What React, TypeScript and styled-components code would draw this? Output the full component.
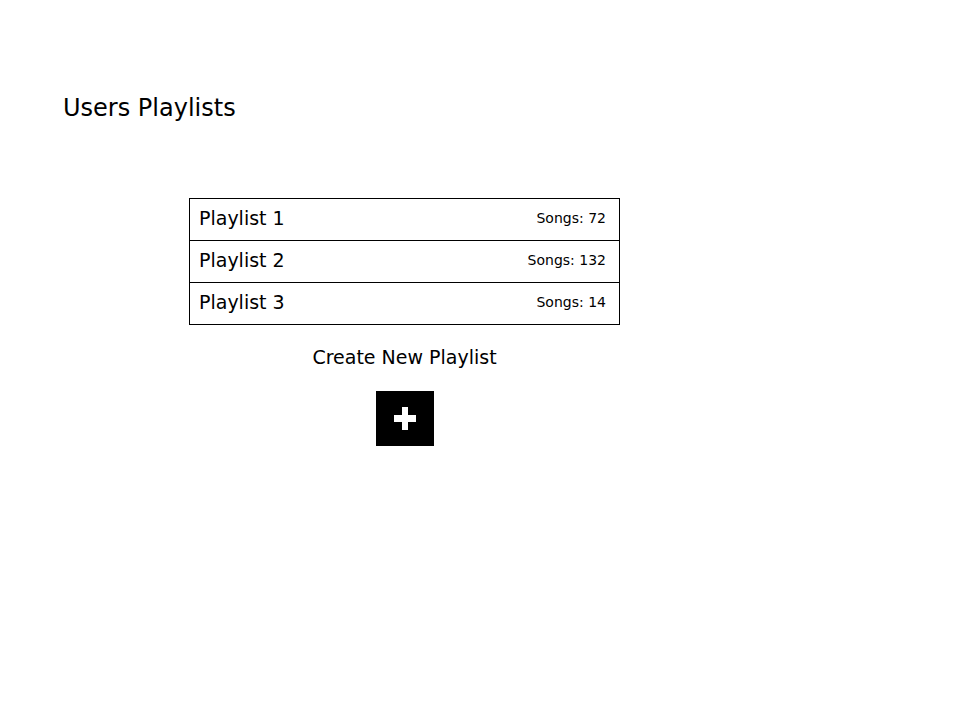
import React from "react";
import styled, { createGlobalStyle } from "styled-components";

const GlobalStyle = createGlobalStyle`
  * { box-sizing: border-box; }
  body {
    margin: 0;
    background: #fff;
    color: #000;
    font-family: Verdana, "DejaVu Sans", sans-serif;
  }
`;

const Page = styled.main`
  padding: 92px 63px;
`;

const Title = styled.h1`
  margin: 0;
  font-size: 24px;
  line-height: 32px;
  font-weight: 400;
`;

const Content = styled.section`
  display: flex;
  flex-direction: column;
  align-items: center;
  width: 100%;
  max-width: 431px;
  margin: 74px 0 0 126px;
`;

const Playlists = styled.ul`
  width: 100%;
  margin: 0;
  padding: 0;
  list-style: none;
  border: 1px solid #000;
`;

const Playlist = styled.li`
  display: flex;
  align-items: center;
  justify-content: space-between;
  padding: 0 13px 2px 9px;

  & + & {
    border-top: 1px solid #000;
  }
`;

const Name = styled.span`
  font-size: 19px;
  line-height: 39px;
`;

const Count = styled.span`
  font-size: 14px;
  line-height: 39px;
`;

const CreateLabel = styled.label`
  margin-top: 20px;
  font-size: 19px;
  line-height: 24px;
`;

const CreateButton = styled.button`
  display: flex;
  align-items: center;
  justify-content: center;
  margin-top: 22px;
  padding: 16px 18px;
  border: 0;
  background: #000;
  cursor: pointer;
`;

const playlists = [
  { name: "Playlist 1", songs: 72 },
  { name: "Playlist 2", songs: 132 },
  { name: "Playlist 3", songs: 14 },
];

export default function App() {
  return (
    <>
      <GlobalStyle />
      <Page>
        <Title>Users Playlists</Title>
        <Content>
          <Playlists>
            {playlists.map(({ name, songs }) => (
              <Playlist key={name}>
                <Name>{name}</Name>
                <Count>Songs: {songs}</Count>
              </Playlist>
            ))}
          </Playlists>
          <CreateLabel htmlFor="create">Create New Playlist</CreateLabel>
          <CreateButton id="create" type="button">
            <svg width="22" height="23" viewBox="0 0 22 23" aria-hidden="true">
              <path d="M8 0h6v8h8v7h-8v8H8v-8H0V8h8z" fill="#fff" />
            </svg>
          </CreateButton>
        </Content>
      </Page>
    </>
  );
}
